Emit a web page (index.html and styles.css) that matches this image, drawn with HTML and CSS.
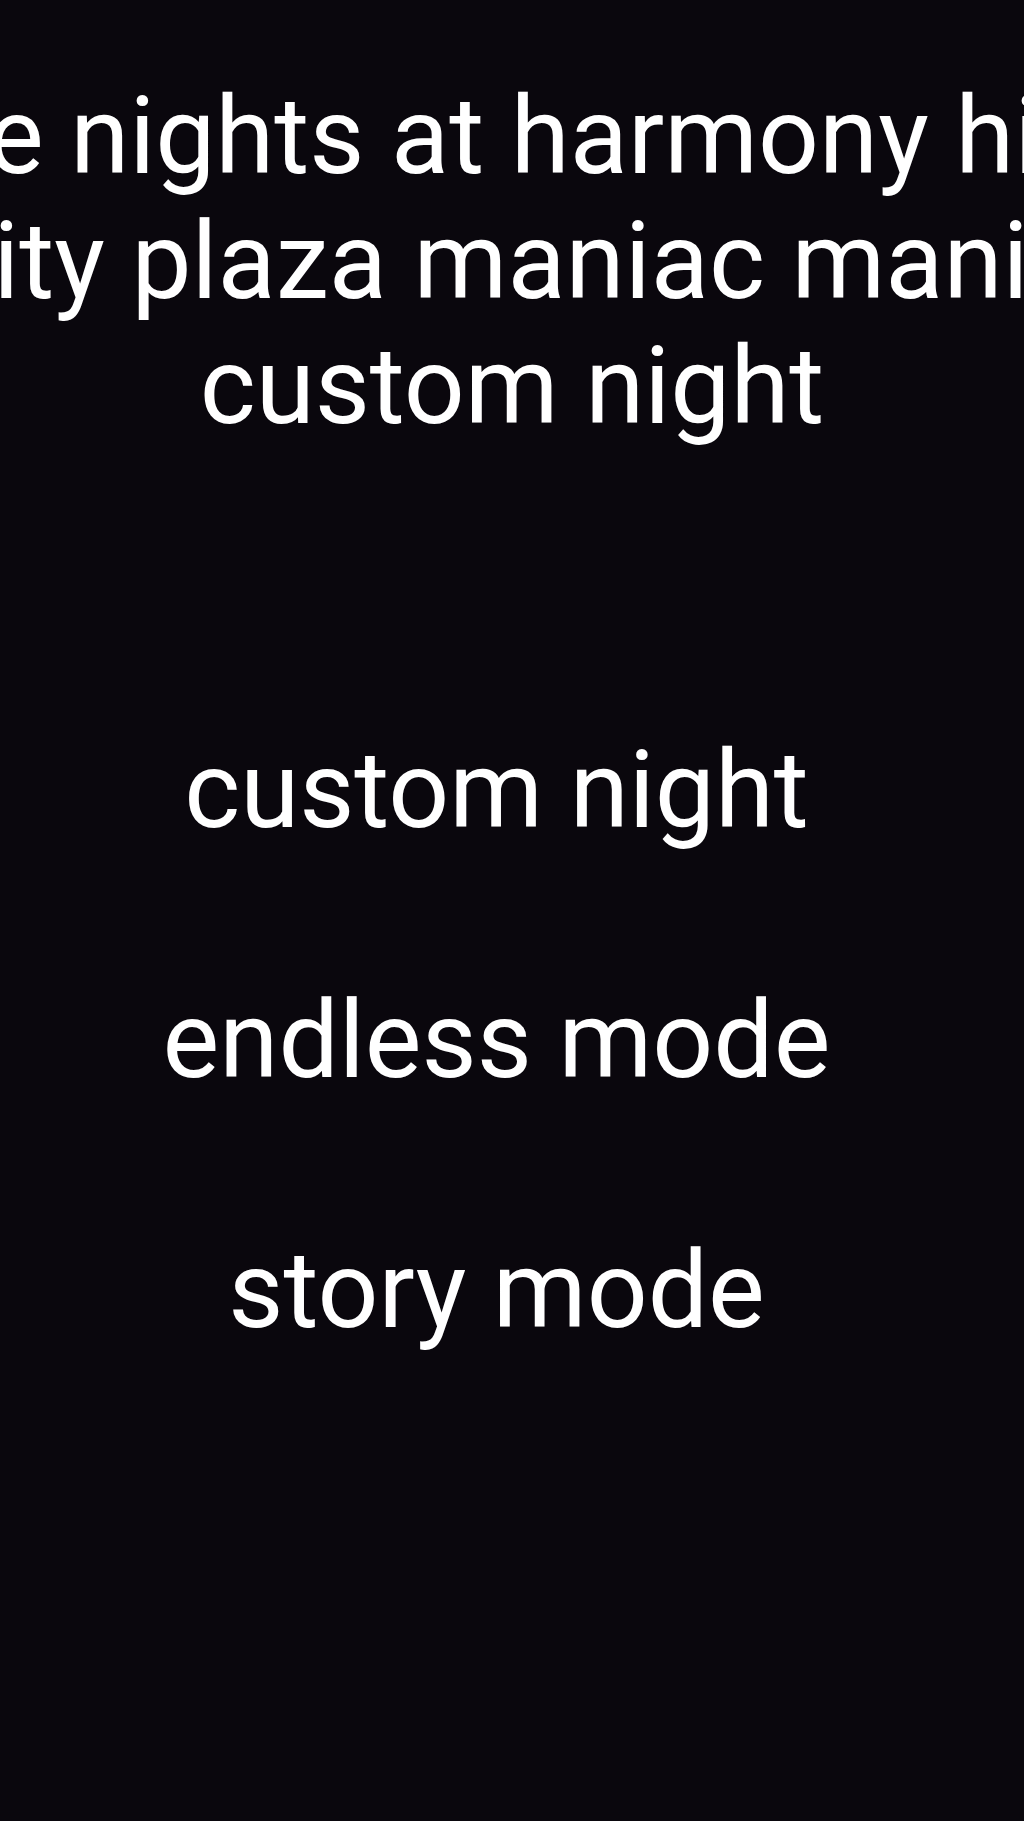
FILE: index.html
```html
<!DOCTYPE html>
<html lang="en">
<head>
    <meta charset="UTF-8">
    <meta name="viewport" content="width=device-width, initial-scale=1.0">
    <title>Five Nights at Harmony Hills</title>
    <link rel="stylesheet" href="styles.css">
</head>
<body>
    <div class="title-screen">
        <div class="game-title">
            <div class="title-line">five nights at harmony hills</div>
            <div class="title-line">city plaza maniac mania</div>
            <div class="title-line">custom night</div>
        </div>
        <div class="mode-menu">
            <div class="mode-button" data-mode="custom">custom night</div>
            <div class="mode-button" data-mode="endless">endless mode</div>
            <div class="mode-button" data-mode="story">story mode</div>
        </div>
    </div>
</body>
</html>
```

FILE: styles.css
```css
html, body {
    margin: 0;
    padding: 0;
    height: 100%;
    overflow: hidden;
}
body {
    background-color: #0a070d;
    color: #fff;
    font-family: Roboto, "Noto Sans", sans-serif;
}
.title-screen {
    display: flex;
    flex-direction: column;
    align-items: center;
    padding-top: 74px;
}
.game-title {
    display: flex;
    flex-direction: column;
    align-items: center;
    width: 100%;
}
.title-line {
    font-size: 107px;
    line-height: normal;
    white-space: nowrap;
}
.mode-menu {
    display: flex;
    flex-direction: column;
    align-items: center;
    gap: 125px;
    margin-top: 279px;
    padding-right: 31px;
}
.mode-button {
    font-size: 107px;
    line-height: normal;
    white-space: nowrap;
    cursor: pointer;
}
```
